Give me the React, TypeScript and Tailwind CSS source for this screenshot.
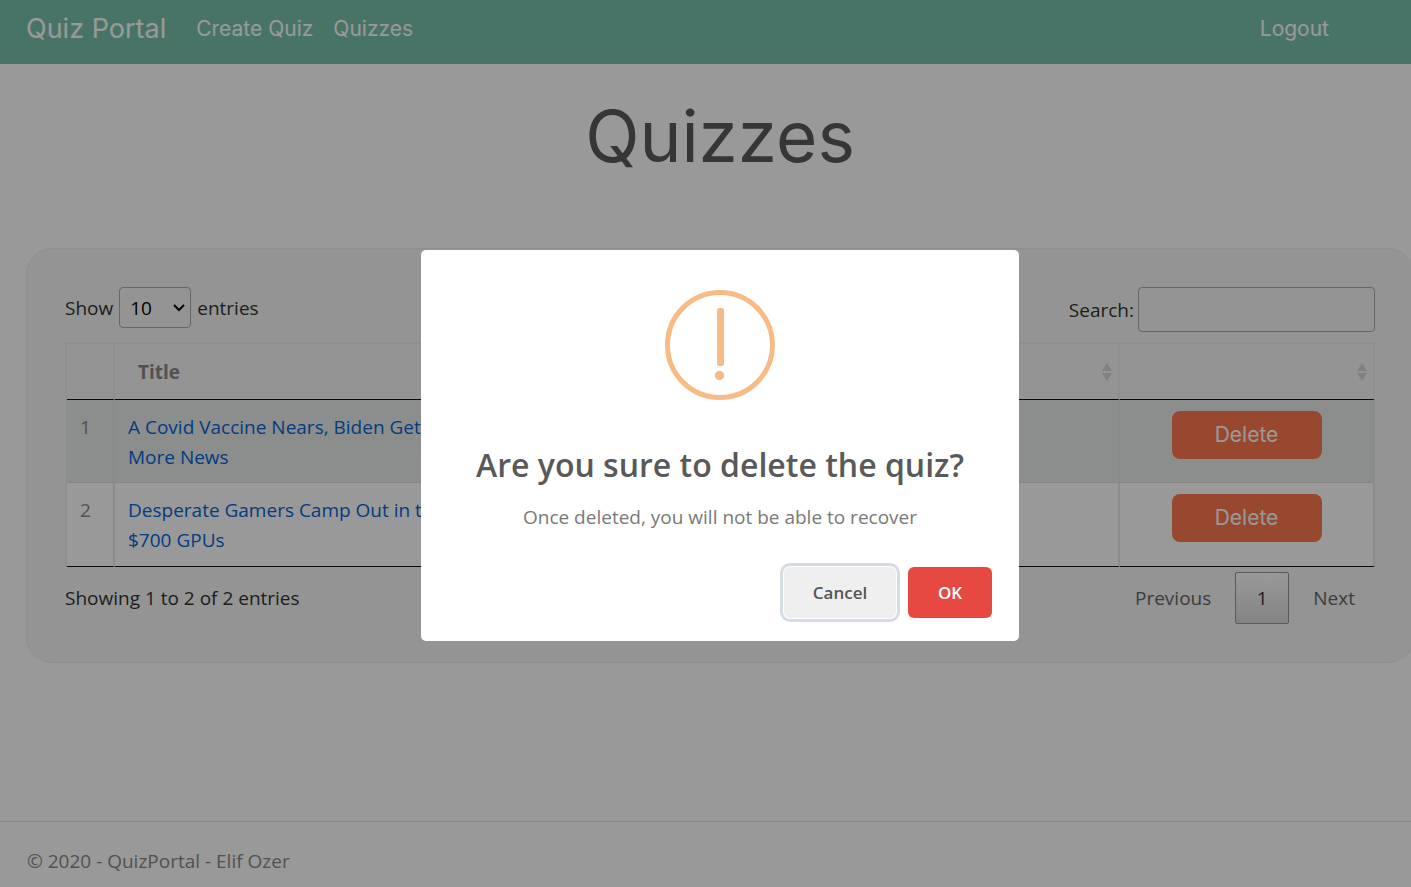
import React from "react";

type Quiz = { id: number; lines: [string, string] };

const quizzes: Quiz[] = [
  { id: 1, lines: ["A Covid Vaccine Nears, Biden Gets", "More News"] },
  { id: 2, lines: ["Desperate Gamers Camp Out in the", "$700 GPUs"] },
];

function SortIcon() {
  return (
    <svg width="10" height="18" viewBox="0 0 10 18" className="ml-auto" fill="#d6d7d8" aria-hidden="true">
      <path d="M5 0 10 8H0zM5 18 0 10h10z" />
    </svg>
  );
}

function WarningIcon() {
  return (
    <svg width="110" height="110" viewBox="0 0 110 110" fill="#f8bb86" aria-hidden="true">
      <circle cx="55" cy="55" r="52.5" fill="none" stroke="#f8bb86" strokeWidth="5" />
      <rect x="52" y="18" width="7" height="58" rx="2.5" />
      <circle cx="54.5" cy="85.5" r="4.7" />
    </svg>
  );
}

function Navbar() {
  return (
    <nav className="flex h-16 items-start bg-[#78c2ad] pl-[26px] pr-[111px] pt-3 font-[Inter,sans-serif] text-[21px] leading-[34px] text-white">
      <a href="#" className="text-[27px]">Quiz Portal</a>
      <a href="#" className="ml-[30px]">Create Quiz</a>
      <a href="#" className="ml-5">Quizzes</a>
      <a href="#" className="ml-auto">Logout</a>
    </nav>
  );
}

function QuizTable() {
  return (
    <table className="w-full table-fixed border-separate border-spacing-0 border-l-2 border-t-2 border-[#eeefef] text-[#888]">
      <colgroup>
        <col className="w-12" />
        <col />
        <col />
        <col className="w-[255px]" />
      </colgroup>
      <thead>
        <tr className="h-14">
          <th className="border-b border-r-2 border-b-[#111] border-r-[#eeefef]"></th>
          <th className="border-b border-r-2 border-b-[#111] border-r-[#eeefef] px-[23px] text-left font-bold">Title</th>
          <th className="border-b border-r-2 border-b-[#111] border-r-[#eeefef] pr-[6px]"><SortIcon /></th>
          <th className="border-b border-r-2 border-b-[#111] border-r-[#eeefef] pr-[6px]"><SortIcon /></th>
        </tr>
      </thead>
      <tbody className="[&>tr:first-child]:bg-[#e9edeb] [&>tr:first-child>td]:border-b-[#dcdfdd] [&>tr:last-child]:h-[84px] [&>tr:last-child]:bg-white [&>tr:last-child>td]:border-b-[#111]">
        {quizzes.map((quiz) => (
          <tr key={quiz.id} className="h-[83px] align-top leading-[30px]">
            <td className="border-b border-r-2 border-r-[#e6e8e7] pl-[13px] pt-3">{quiz.id}</td>
            <td className="border-b border-r-2 border-r-[#e6e8e7] pl-[13px] pt-3">
              <a href="#" className="whitespace-nowrap text-[#0366d6]">
                {quiz.lines[0]}
                <br />
                {quiz.lines[1]}
              </a>
            </td>
            <td className="border-b border-r-2 border-r-[#e6e8e7]"></td>
            <td className="border-b border-r-2 border-r-[#e6e8e7] pt-[11px] text-center">
              <button className="h-12 w-[150px] rounded-lg bg-[#ff7851] font-[Inter,sans-serif] text-[21px] text-white">
                Delete
              </button>
            </td>
          </tr>
        ))}
      </tbody>
    </table>
  );
}

function QuizPanel() {
  return (
    <section className="mx-[26px] rounded-[26px] border border-[#efefef] bg-[#f7f7f7] px-[38px] pb-[38px] pt-[38px] text-[#333]">
      <div className="flex items-start justify-between pb-[10px]">
        <label className="flex items-center gap-[6px]">
          Show
          <span className="relative inline-flex items-center">
            <select className="h-[41px] w-[72px] appearance-none rounded border border-[#aaa] pl-[10px] text-black">
              <option>10</option>
            </select>
            <svg width="12" height="8" viewBox="0 0 12 8" className="pointer-events-none absolute right-[6px]" fill="none" stroke="#000" strokeWidth="2" aria-hidden="true">
              <path d="m1 1 5 5 5-5" />
            </svg>
          </span>
          entries
        </label>
        <label className="flex items-center gap-1">
          Search:
          <input type="search" className="h-[45px] w-[237px] rounded border border-[#aaa] px-2" />
        </label>
      </div>
      <QuizTable />
      <div className="flex items-start justify-between pt-[5px]">
        <p className="pt-[11px]">Showing 1 to 2 of 2 entries</p>
        <div className="flex gap-1">
          <button className="h-[52px] px-5 text-[#666]">Previous</button>
          <button className="h-[52px] w-[54px] rounded-xs border border-[#979797] bg-linear-to-b from-white to-[#dcdcdc]">1</button>
          <button className="h-[52px] px-5 text-[#666]">Next</button>
        </div>
      </div>
    </section>
  );
}

function ConfirmDialog() {
  return (
    <div className="fixed inset-y-0 left-0 flex w-[calc(100%+29px)] items-center justify-center bg-black/40 pt-1">
      <div role="alertdialog" aria-labelledby="confirm-title" aria-describedby="confirm-text" className="flex w-[598px] flex-col items-center rounded-[5px] bg-white px-[27px] pb-[23px] pt-10">
        <WarningIcon />
        <h2 id="confirm-title" className="mt-[41px] whitespace-nowrap text-[32px] font-semibold leading-[48px] text-[#595959]">
          Are you sure to delete the quiz?
        </h2>
        <p id="confirm-text" className="mt-[14px] leading-7 text-[#797979]">
          Once deleted, you will not be able to recover
        </p>
        <div className="mt-9 flex gap-3 self-end text-[17px] font-semibold">
          <button className="h-[51px] w-28 rounded-md bg-[#efefef] text-[#555] shadow-[0_0_0_1px_#fff,0_0_0_4px_#d5dce3]">
            Cancel
          </button>
          <button className="h-[51px] w-[84px] rounded-md bg-[#e64942] text-white">OK</button>
        </div>
      </div>
    </div>
  );
}

export default function App() {
  return (
    <div className="overflow-x-hidden bg-white font-['Open_Sans',sans-serif] text-[19px] leading-[30px]">
      <div className="flex min-h-screen w-[calc(100%+29px)] flex-col">
        <Navbar />
        <main>
          <h1 className="mb-[66px] mt-[26px] text-center font-[Inter,sans-serif] text-[71px] font-normal leading-[92px] text-[#5a5a5a]">
            Quizzes
          </h1>
          <QuizPanel />
        </main>
        <footer className="mt-auto border-t border-[#e5e5e5] px-[27px] pb-[11px] pt-6 text-[#888]">
          © 2020 - QuizPortal - Elif Ozer
        </footer>
      </div>
      <ConfirmDialog />
    </div>
  );
}
